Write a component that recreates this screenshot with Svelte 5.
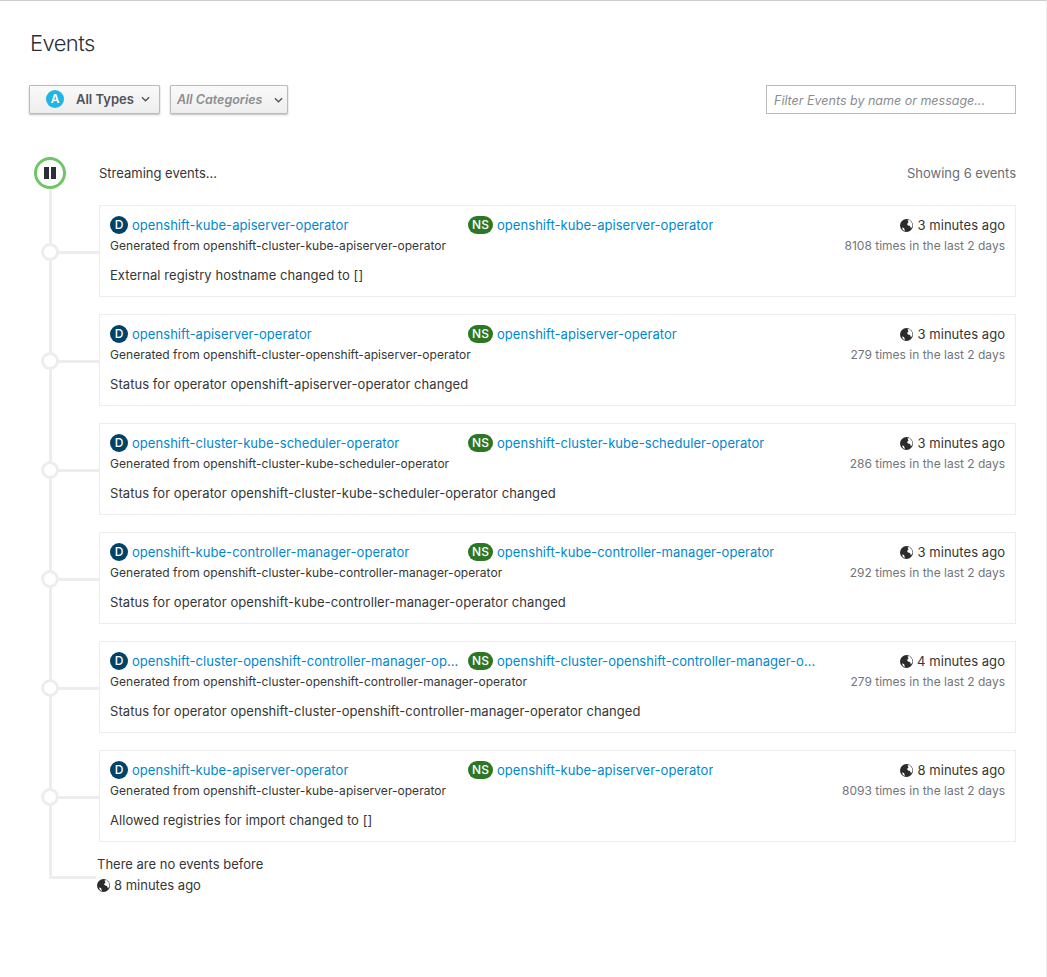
<script>
    const events = [
        { name: 'openshift-kube-apiserver-operator', source: 'openshift-cluster-kube-apiserver-operator', age: '3 minutes ago', count: '8108 times in the last 2 days', message: 'External registry hostname changed to []' },
        { name: 'openshift-apiserver-operator', source: 'openshift-cluster-openshift-apiserver-operator', age: '3 minutes ago', count: '279 times in the last 2 days', message: 'Status for operator openshift-apiserver-operator changed' },
        { name: 'openshift-cluster-kube-scheduler-operator', source: 'openshift-cluster-kube-scheduler-operator', age: '3 minutes ago', count: '286 times in the last 2 days', message: 'Status for operator openshift-cluster-kube-scheduler-operator changed' },
        { name: 'openshift-kube-controller-manager-operator', source: 'openshift-cluster-kube-controller-manager-operator', age: '3 minutes ago', count: '292 times in the last 2 days', message: 'Status for operator openshift-kube-controller-manager-operator changed' },
        { name: 'openshift-cluster-openshift-controller-manager-operator', source: 'openshift-cluster-openshift-controller-manager-operator', age: '4 minutes ago', count: '279 times in the last 2 days', message: 'Status for operator openshift-cluster-openshift-controller-manager-operator changed' },
        { name: 'openshift-kube-apiserver-operator', source: 'openshift-cluster-kube-apiserver-operator', age: '8 minutes ago', count: '8093 times in the last 2 days', message: 'Allowed registries for import changed to []' }
    ]
</script>

{#snippet globe()}
    <svg class="globe" viewBox="0 0 13 13">
        <circle cx="6.500" cy="6.500" r="6.500" fill="#2b2b2b"></circle>
        <path d="M7.500 1.500 9.500 1 12 4 12.500 7 11 9.500 10 7 8 6.500 7 5 8.500 3.500ZM2 8.500 4 9 5 12 3 11Z" fill="#fff"></path>
    </svg>
{/snippet}

<div class="page">
    <h1>Events</h1>

    <div class="filters">
        <div class="group">
            <button class="dropdown types">
                <span class="badge-a">A</span>
                <span class="label">All Types</span>
                <svg class="caret" viewBox="0 0 10 6"><path d="M1 1l4 4 4-4" fill="none" stroke="#4d5258" stroke-width="1.400"></path></svg>
            </button>
            <button class="dropdown categories">
                <span class="label">All Categories</span>
                <svg class="caret" viewBox="0 0 10 6"><path d="M1 1l4 4 4-4" fill="none" stroke="#4d5258" stroke-width="1.400"></path></svg>
            </button>
        </div>
        <input class="search" placeholder="Filter Events by name or message..." />
    </div>

    <div class="timeline">
        <div class="stream-head">
            <span class="pause"><i></i><i></i></span>
            <span class="streaming">Streaming events...</span>
            <span class="showing">Showing 6 events</span>
        </div>

        {#each events as ev}
            <div class="row">
                <div class="card">
                    <div class="top">
                        <div class="left">
                            <div class="names">
                                <div class="res first">
                                    <span class="icon deploy">D</span>
                                    <a href="#d">{ev.name}</a>
                                </div>
                                <div class="res">
                                    <span class="icon ns">NS</span>
                                    <a href="#ns">{ev.name}</a>
                                </div>
                            </div>
                            <div class="source">Generated from {ev.source}</div>
                        </div>
                        <div class="right">
                            <div class="age">{@render globe()}{ev.age}</div>
                            <div class="count">{ev.count}</div>
                        </div>
                    </div>
                    <div class="message">{ev.message}</div>
                </div>
            </div>
        {/each}

        <div class="end">
            <div>There are no events before</div>
            <div>{@render globe()}8 minutes ago</div>
        </div>
    </div>
</div>

<style>
    :global(body) {
        margin: 0;
        background: #fff;
    }
    .page {
        box-sizing: border-box;
        height: 977px;
        padding: 0 30px 0 29px;
        border-top: 1px solid #ccc;
        border-right: 1px solid #ededed;
        font-family: "Inter", "Liberation Sans", sans-serif;
        font-size: 13px;
        color: #363636;
    }
    h1 {
        margin: 0;
        padding: 27px 0 0 1px;
        height: 56px;
        box-sizing: border-box;
        font-size: 22px;
        line-height: 30px;
        font-weight: 300;
        letter-spacing: -.6px;
        color: #2b2f38;
    }
    .filters {
        display: flex;
        justify-content: space-between;
        margin-top: 28px;
        height: 29px;
    }
    .group {
        display: flex;
        gap: 10px;
    }
    .dropdown {
        display: flex;
        align-items: center;
        box-sizing: border-box;
        height: 29px;
        border: 1px solid #bbb;
        border-radius: 1px;
        background: linear-gradient(#fafafa, #ededed);
        box-shadow: 0 1px 2px rgba(0, 0, 0, .25);
        font: inherit;
        font-weight: 600;
        color: #4d5258;
        padding: 0 0 1px;
    }
    .types {
        width: 131px;
        padding-left: 16px;
    }
    .categories {
        width: 118px;
        padding-left: 6px;
        padding-bottom: 0;
        font-size: 12.500px;
    }
    .categories .label {
        font-style: italic;
        color: #8b8d8f;
    }
    .badge-a {
        width: 18px;
        height: 18px;
        border-radius: 50%;
        background: #1fb5e6;
        color: #fff;
        font-size: 12px;
        line-height: 18px;
        text-align: center;
        margin-right: 12px;
    }
    .caret {
        width: 9px;
        height: 6px;
        margin-left: auto;
        margin-right: 9px;
    }
    .categories .caret {
        margin-right: 4px;
    }
    .search {
        box-sizing: border-box;
        width: 250px;
        height: 29px;
        border: 1px solid #bbb;
        padding: 1px 7px 0;
        font: inherit;
        font-size: 12.500px;
        font-style: italic;
        outline: none;
    }
    .search::placeholder {
        color: #8b8d8f;
        opacity: 1;
    }
    .timeline {
        position: relative;
        margin-top: 44px;
        margin-left: 70px;
    }
    .timeline::before {
        content: "";
        position: absolute;
        left: -50px;
        top: 20px;
        bottom: 17px;
        width: 3px;
        background: #ededed;
    }
    .stream-head {
        display: flex;
        justify-content: space-between;
        align-items: center;
        height: 30px;
        margin-bottom: 17px;
        position: relative;
    }
    .pause {
        position: absolute;
        left: -65px;
        top: -1px;
        box-sizing: border-box;
        width: 32px;
        height: 32px;
        border: 3px solid #6ec664;
        border-radius: 50%;
        background: #fff;
        display: flex;
        align-items: center;
        justify-content: center;
        gap: 2px;
    }
    .pause i {
        width: 5px;
        height: 12px;
        background: #2b2f38;
    }
    .showing {
        color: #6a6e73;
    }
    .row {
        position: relative;
        margin-bottom: 17px;
    }
    .row::before {
        content: "";
        position: absolute;
        left: -50px;
        width: 50px;
        top: 46px;
        height: 3px;
        background: #ededed;
    }
    .row::after {
        content: "";
        position: absolute;
        left: -58px;
        top: 38px;
        box-sizing: border-box;
        width: 18px;
        height: 18px;
        border: 3px solid #ededed;
        border-radius: 50%;
        background: #fff;
    }
    .card {
        box-sizing: border-box;
        height: 92px;
        border: 1px solid #ededed;
        padding: 8px 10px 10px;
    }
    .top {
        display: flex;
    }
    .left {
        flex: 1;
        min-width: 0;
    }
    .names {
        display: flex;
        height: 21px;
        align-items: center;
        margin-bottom: 1px;
    }
    .res {
        display: flex;
        align-items: center;
        width: 352px;
        min-width: 0;
        font-size: 13px;
        letter-spacing: .05px;
    }
    .res.first {
        width: 358px;
    }
    .res a {
        color: #0088ce;
        text-decoration: none;
        overflow: hidden;
        white-space: nowrap;
        text-overflow: ellipsis;
    }
    .res.first a {
        padding-right: 5px;
    }
    .icon {
        flex: none;
        height: 18px;
        min-width: 18px;
        box-sizing: border-box;
        margin-right: 4px;
        border-radius: 10px;
        color: #fff;
        font-size: 12px;
        font-weight: 500;
        line-height: 18px;
        text-align: center;
    }
    .deploy {
        background: #004368;
    }
    .ns {
        background: #2d7623;
        padding: 0 4px;
        min-width: 25px;
    }
    .source {
        font-size: 12px;
        line-height: 20px;
        letter-spacing: .03px;
    }
    .right {
        width: 185px;
        flex: none;
        text-align: right;
    }
    .age {
        font-size: 13px;
        line-height: 21px;
        letter-spacing: .05px;
        margin-top: 1px;
    }
    .count {
        font-size: 12px;
        line-height: 20px;
        color: #72767b;
    }
    .globe {
        width: 13px;
        height: 13px;
        margin-right: 4px;
        vertical-align: -2px;
    }
    .message {
        margin-top: 9px;
        font-size: 13px;
        line-height: 20px;
        letter-spacing: .06px;
    }
    .end {
        position: relative;
        margin: -5px 0 0 -2px;
        font-size: 13px;
        line-height: 21px;
    }
    .end::before {
        content: "";
        position: absolute;
        left: -48px;
        width: 47px;
        top: 22px;
        height: 3px;
        background: #ededed;
    }
</style>
